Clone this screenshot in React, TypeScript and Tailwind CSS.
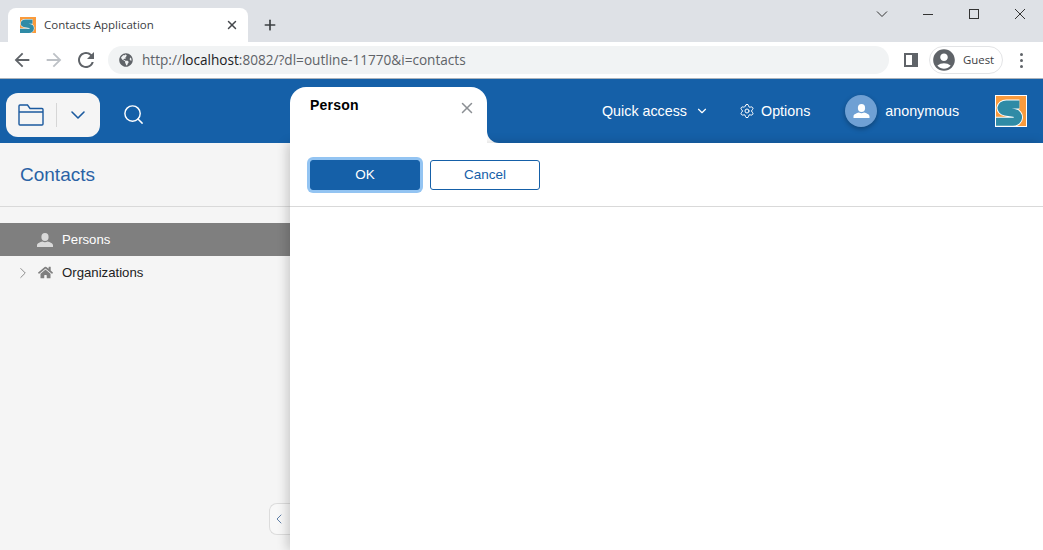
// App.tsx
import React from "react";
import { ChevronDown, ChevronLeft, ChevronRight, Plus, Search, Settings, X } from "lucide-react";
import { FaGlobeAmericas, FaHome } from "react-icons/fa";
import { MdAccountCircle, MdArrowBack, MdArrowForward, MdRefresh } from "react-icons/md";

const chromeFont = "font-['Open_Sans',sans-serif]";
const appFont = "font-['Liberation_Sans',sans-serif]";

const S_PATH = "M25 9 H11 C4.5 9 4 15.5 10 16.5 L19 18 C25.5 19 25 27.5 18 27.5 H-2";

const Logo: React.FC<{ className: string }> = ({ className }) => (
  <svg viewBox="0 0 32 32" className={className}>
    <rect width="32" height="32" fill="#f99b3d" />
    <path d={S_PATH} fill="none" stroke="#fff" strokeWidth="10.5" />
    <path d={S_PATH} fill="none" stroke="#2f8ba6" strokeWidth="8.5" />
  </svg>
);

const PersonIcon: React.FC<{ className: string }> = ({ className }) => (
  <svg viewBox="0 0 16 14" className={className} fill="currentColor">
    <ellipse cx="8" cy="4" rx="3.6" ry="4" />
    <path d="M0 14 V12.2 C0 10 3 9.2 5.4 8.4 C7 9.4 9 9.4 10.6 8.4 C13 9.2 16 10 16 12.2 V14 Z" />
  </svg>
);

const Browser: React.FC = () => (
  <div className={`shrink-0 ${chromeFont}`}>
    <div className="flex h-[42px] items-end bg-[#dee1e6] pl-2">
      <div className="flex h-[34px] w-[240px] items-center rounded-t-lg bg-white pl-3 pr-[9px]">
        <Logo className="h-4 w-4" />
        <span className="ml-2 flex-1 text-[11.5px] text-[#3c4043]">Contacts Application</span>
        <X size={14} strokeWidth={2.5} className="text-[#45484c]" />
      </div>
      <div className="ml-[14px] flex h-[34px] items-center">
        <Plus size={16} strokeWidth={2.5} className="text-[#3c4043]" />
      </div>
      <div className="ml-auto flex h-[42px] items-start pt-[8px] text-[#333]">
        <svg viewBox="0 0 12 12" className="mr-[34px] h-3 w-3" fill="none" stroke="currentColor">
          <path d="M1 3.5 L6 8.5 L11 3.5" />
        </svg>
        <svg viewBox="0 0 12 12" className="mr-[34px] h-3 w-3" fill="none" stroke="currentColor">
          <path d="M1 6.5 H11" />
        </svg>
        <svg viewBox="0 0 12 12" className="mr-[34px] h-3 w-3" fill="none" stroke="currentColor">
          <rect x="1.5" y="1.5" width="9" height="9" />
        </svg>
        <svg viewBox="0 0 12 12" className="mr-[17px] h-3 w-3" fill="none" stroke="currentColor">
          <path d="M1 1 L11 11 M11 1 L1 11" />
        </svg>
      </div>
    </div>
    <div className="flex h-[37px] items-start border-b border-[#aab2bb] bg-white pl-[11px] pt-[4px]">
      <div className="flex h-[28px] w-[97px] items-center">
        <MdArrowBack size={22} className="text-[#5f6368]" />
        <MdArrowForward size={22} className="ml-[10px] text-[#bdc1c6]" />
        <MdRefresh size={24} className="ml-[9px] text-[#5f6368]" />
      </div>
      <div className="flex h-[28px] w-[781px] items-center rounded-full bg-[#f1f3f4] pl-[11px]">
        <FaGlobeAmericas size={14} className="text-[#5f6368]" />
        <span className="ml-[9px] text-[13.6px] text-[#5f6368]">
          http://<span className="text-[#202124]">localhost</span>:8082/?dl=outline-11770&amp;i=contacts
        </span>
      </div>
      <div className="ml-[15px] flex h-[28px] items-center">
        <div className="flex h-[14px] w-[14px] bg-[#5f6368] p-[2px] pr-[6px]">
          <div className="flex-1 bg-white" />
        </div>
      </div>
      <div className="ml-[11px] flex h-[28px] w-[74px] items-center rounded-full border border-[#e3e4e6] pl-[1px]">
        <MdAccountCircle size={26} className="text-[#5f6368]" />
        <span className="ml-[6px] text-[11.4px] text-[#3c4043]">Guest</span>
      </div>
      <div className="ml-[17px] flex h-[28px] flex-col items-center justify-center gap-[3px]">
        <div className="h-[3px] w-[3px] rounded-full bg-[#5f6368]" />
        <div className="h-[3px] w-[3px] rounded-full bg-[#5f6368]" />
        <div className="h-[3px] w-[3px] rounded-full bg-[#5f6368]" />
      </div>
    </div>
  </div>
);

const Header: React.FC = () => (
  <div className={`flex h-16 shrink-0 bg-white text-white ${appFont}`}>
    <div className="flex w-[290px] shrink-0 items-start bg-[#1560a8] pl-[6px] pt-[14px]">
      <div className="flex h-[44px] w-[94px] items-center rounded-xl bg-[#f5f5f5] pl-3">
        <svg viewBox="0 0 26 22" className="h-[22px] w-[26px]" fill="none" stroke="#1b5a9f" strokeWidth="1.4">
          <path d="M1 20 V2 C1 1.4 1.4 1 2 1 H9.5 L12 4.5 H24 C24.6 4.5 25 5 25 5.5 V20 C25 20.6 24.6 21 24 21 H2 C1.4 21 1 20.6 1 20 Z M1 8 H25" />
        </svg>
        <div className="ml-3 h-6 w-px bg-[#d6d6d6]" />
        <ChevronDown size={24} strokeWidth={1.6} className="ml-[9px] text-[#1b5a9f]" />
      </div>
      <Search size={23} strokeWidth={1.5} className="ml-[22px] mt-[10px]" />
    </div>
    <div className="w-[197px] shrink-0 bg-[#1560a8] pt-2">
      <div className="relative z-10 flex h-14 items-start justify-between rounded-t-2xl bg-white pl-5 pr-3 pt-[10px]">
        <span className="text-[14px] font-bold leading-[17px] tracking-[0.2px] text-black">Person</span>
        <X size={18} strokeWidth={2} className="mt-[2px] mr-[-1px] text-[#8b8f94]" />
      </div>
    </div>
    <div className="flex flex-1 items-center whitespace-nowrap rounded-bl-xl bg-[#1560a8] pl-[115px]">
      <span className="pt-[2px] text-[14.3px]">Quick access</span>
      <ChevronDown size={14} strokeWidth={2} className="ml-[8px] shrink-0" />
      <Settings size={16} strokeWidth={1.5} className="ml-[30px] shrink-0" />
      <span className="ml-[6px] pt-[2px] text-[14.3px]">Options</span>
      <div className="ml-[35px] flex h-8 w-8 shrink-0 items-center justify-center rounded-full bg-[#6fa0d4] shadow-[0_2px_5px_rgba(0,0,0,0.3)]">
        <PersonIcon className="h-[14px] w-[17px] text-white" />
      </div>
      <span className="ml-2 pt-[2px] text-[14.3px]">anonymous</span>
      <div className="ml-9 shrink-0 border border-white">
        <Logo className="h-[30px] w-[30px]" />
      </div>
    </div>
  </div>
);

const Sidebar: React.FC = () => (
  <div className={`relative w-[290px] shrink-0 bg-[#f5f5f5] ${appFont}`}>
    <div className="flex h-[64px] items-center border-b border-[#d9d9d9] pl-5 pt-[1px] text-[19px] text-[#2a62a5]">
      Contacts
    </div>
    <div className="mt-4 flex h-[33px] items-center bg-[#7f7f7f] pl-[37px] text-[13.2px] text-white">
      <PersonIcon className="h-[14px] w-4 text-[#d9d9d9]" />
      <span className="ml-[9px]">Persons</span>
    </div>
    <div className="flex h-[33px] items-center pl-[14px] text-[13.2px] text-[#222]">
      <ChevronRight size={18} strokeWidth={1.3} className="text-[#8a8a8a]" />
      <FaHome size={15} className="ml-[6px] text-[#7f7f7f]" />
      <span className="ml-[9px]">Organizations</span>
    </div>
    <div className="absolute right-0 top-[360px] flex h-8 w-[21px] items-center justify-center rounded-l-lg border border-r-0 border-[#dcdcdc] bg-[#f8f8f8]">
      <ChevronLeft size={16} strokeWidth={1.5} className="ml-[-2px] text-[#5f7fa8]" />
    </div>
  </div>
);

const Form: React.FC = () => (
  <div className={`z-[5] flex-1 bg-white shadow-[-3px_0_10px_rgba(0,0,0,0.18)] ${appFont}`}>
    <div className="flex h-[64px] items-start gap-[10px] border-b border-[#d9d9d9] pl-5 pt-[17px] text-[13.5px]">
      <button className="h-[30px] w-[110px] rounded-[3px] border border-[#1560a8] bg-[#1560a8] text-white ring-[3px] ring-[#93c4f2]">
        OK
      </button>
      <button className="h-[30px] w-[110px] rounded-[3px] border border-[#1560a8] bg-white text-[#1560a8]">
        Cancel
      </button>
    </div>
  </div>
);

const App: React.FC = () => {
  return (
    <div className="flex h-[550px] w-full flex-col overflow-hidden bg-white">
      <Browser />
      <Header />
      <div className="flex min-h-0 flex-1">
        <Sidebar />
        <Form />
      </div>
    </div>
  );
};

export default App;
